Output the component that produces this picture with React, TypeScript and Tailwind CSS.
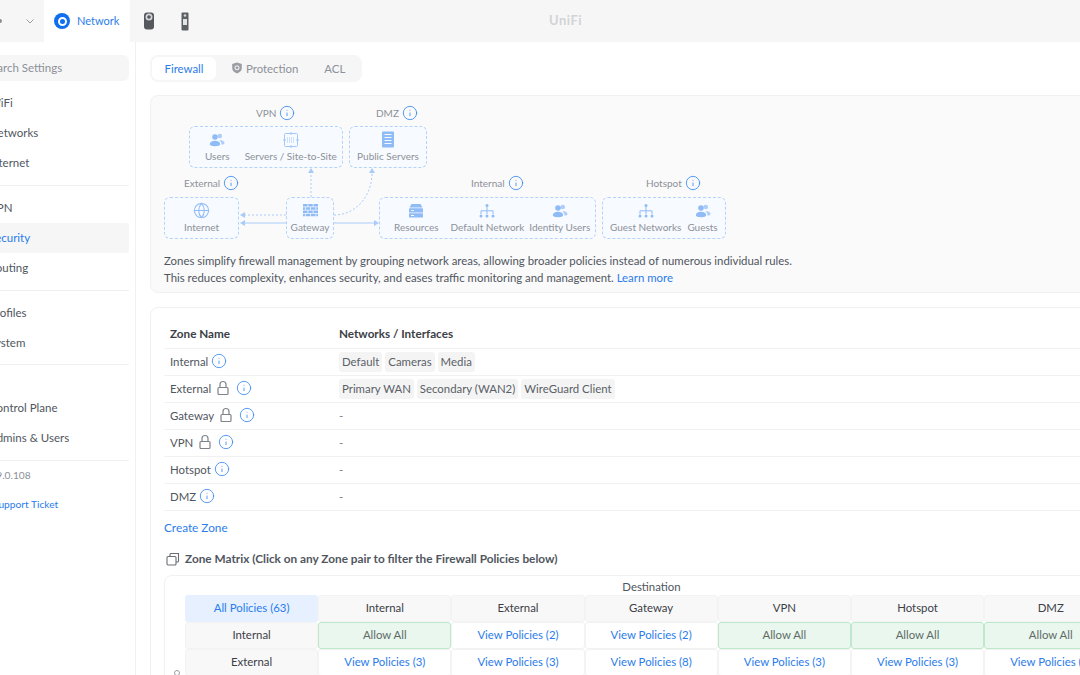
import { Globe, Info } from 'lucide-react';

const zoneRows = [
  { name: 'Internal', locked: false, nets: ['Default', 'Cameras', 'Media'] },
  { name: 'External', locked: true, nets: ['Primary WAN', 'Secondary (WAN2)', 'WireGuard Client'] },
  { name: 'Gateway', locked: true, nets: [] },
  { name: 'VPN', locked: true, nets: [] },
  { name: 'Hotspot', locked: false, nets: [] },
  { name: 'DMZ', locked: false, nets: [] },
];

const matrixHead = ['Internal', 'External', 'Gateway', 'VPN', 'Hotspot', 'DMZ'];
const matrixRows = [
  { name: 'Internal', cells: ['Allow All', 'View Policies (2)', 'View Policies (2)', 'Allow All', 'Allow All', 'Allow All'] },
  { name: 'External', cells: ['View Policies (3)', 'View Policies (3)', 'View Policies (8)', 'View Policies (3)', 'View Policies (3)', 'View Policies (3)'] },
];

function InfoIcon({ className = '' }: { className?: string }) {
  return <Info className={`w-[16px] h-[16px] text-[#3d8bf2] shrink-0 ${className}`} strokeWidth={1.3} />;
}

function LockIcon() {
  return (
    <svg width="14" height="16" viewBox="0 0 14 16" fill="none" stroke="#7f8389" strokeWidth="1.2" className="shrink-0 ml-[5px]">
      <rect x="2" y="7.500" width="10" height="7" rx="1" />
      <path d="M4 7.500V4.500a3 3 0 0 1 6 0v3" />
    </svg>
  );
}

function UsersIcon() {
  return (
    <svg width="16" height="16" viewBox="0 0 16 16" fill="#8fbbf7">
      <circle cx="10.800" cy="4" r="2.300" opacity="0.7" />
      <path d="M10 8c3 0 5.500 1 5.500 3 0 1-1 1.500-3 1.500 0-2-1-3.500-2.500-4.500z" opacity="0.7" />
      <circle cx="6" cy="5" r="2.800" />
      <path d="M.8 12.300C.8 10 3 8.700 6 8.700s5.200 1.300 5.200 3.600c0 1.200-2 1.900-5.200 1.900S.8 13.500.8 12.300z" />
    </svg>
  );
}

function SiteIcon() {
  return (
    <svg width="16" height="16" viewBox="0 0 16 16" fill="none" stroke="#a5c8f8" strokeWidth="1">
      <rect x="1.500" y="1.500" width="13" height="13" rx="1" />
      <path d="M8 0v3M8 13v3M0 8h3M13 8h3" />
      <path d="M4 6h8M4 8h8M4 10h8" strokeDasharray="1 1" />
    </svg>
  );
}

function PublicServerIcon() {
  return (
    <svg width="16" height="17" viewBox="0 0 16 17" fill="#8fbbf7">
      <path fillRule="evenodd" d="M3 .5h10a1 1 0 0 1 1 1v14a1 1 0 0 1-1 1H3a1 1 0 0 1-1-1v-14a1 1 0 0 1 1-1zM4.500 3v1h7V3zm0 3v1h7V6zm0 3v1h7V9zm0 3v1h7v-1z" />
    </svg>
  );
}

function WallIcon() {
  return (
    <svg width="15" height="15" viewBox="0 0 15 15" fill="#8fbbf7">
      <path d="M0 1h4.500v2.500H0zM5.250 1h4.500v2.500h-4.500zM10.500 1H15v2.500h-4.500zM0 4.250h2v2.500H0zM2.750 4.250h4.500v2.500h-4.500zM8 4.250h4.500v2.500H8zM13.250 4.250H15v2.500h-1.750zM0 7.500h4.500V10H0zM5.250 7.500h4.500V10h-4.500zM10.500 7.500H15V10h-4.500zM0 10.750h2v2.500H0zM2.750 10.750h4.500v2.500h-4.500zM8 10.750h4.500v2.500H8zM13.250 10.750H15v2.500h-1.750z" />
    </svg>
  );
}

function ServerStackIcon() {
  return (
    <svg width="16" height="16" viewBox="0 0 16 16" fill="#8fbbf7">
      <path d="M3.500 1h9l2 3.500h-13z" />
      <rect x="1" y="5.200" width="14" height="4.300" rx="0.600" />
      <rect x="1" y="10.300" width="14" height="4.300" rx="0.600" />
      <path d="M3 7h3v0.800H3zM3 12.100h3v0.800H3z" fill="#fff" />
    </svg>
  );
}

function HierarchyIcon() {
  return (
    <svg width="16" height="16" viewBox="0 0 16 16" fill="#8fbbf7" stroke="none">
      <circle cx="8" cy="2.500" r="1.500" />
      <circle cx="2" cy="13" r="1.500" />
      <circle cx="8" cy="13" r="1.500" />
      <circle cx="14" cy="13" r="1.500" />
      <path d="M8 4v7M2 11V7.800h12V11" fill="none" stroke="#8fbbf7" strokeWidth="1" />
    </svg>
  );
}

function ShieldIcon() {
  return (
    <svg width="12" height="12" viewBox="0 0 12 12" className="shrink-0">
      <path d="M6 .5l4.800 1.500v4c0 2.800-2.200 4.500-4.800 5.500C3.400 10.500 1.200 8.800 1.200 6V2z" fill="#9a9ea4" />
      <circle cx="6" cy="5.800" r="2.500" fill="#e6e7e9" />
      <circle cx="6" cy="5.800" r="1.300" fill="#9a9ea4" />
    </svg>
  );
}

function DiagramItem({ icon, label, className = '' }: { icon: React.ReactNode; label: string; className?: string }) {
  return (
    <div className={`flex flex-col items-center gap-[1px] ${className}`}>
      <div className="h-[17px] flex items-center justify-center">{icon}</div>
      <span className="text-[10px] leading-[14px] text-[#8d9198] whitespace-nowrap">{label}</span>
    </div>
  );
}

function ZoneLabel({ label, className }: { label: string; className: string }) {
  return (
    <div className={`absolute flex items-center gap-[3px] h-[14px] text-[10px] text-[#8d9198] ${className}`}>
      {label}
      <InfoIcon />
    </div>
  );
}

function ZoneBox({ className, children }: { className: string; children: React.ReactNode }) {
  return (
    <div className={`absolute h-[42px] flex items-center bg-[#f7faff] border border-dashed border-[#b5d2fa] rounded-[6px] ${className}`}>
      {children}
    </div>
  );
}

function Connectors() {
  return (
    <svg className="absolute inset-0 pointer-events-none" width="600" height="155" fill="none" stroke="#a9cbf9" strokeWidth="1">
      <path d="M160 101V77" strokeDasharray="2 2" />
      <path d="M160 72l-3 5h6z" fill="#a9cbf9" stroke="none" />
      <path d="M183 119C205 119 221 100 221 77" strokeDasharray="2 2" />
      <path d="M221 72l-3 5h6z" fill="#a9cbf9" stroke="none" />
      <path d="M135 119H94" strokeDasharray="2 2" />
      <path d="M89 119l5-3v6z" fill="#a9cbf9" stroke="none" />
      <path d="M135 127H94" />
      <path d="M89 127l5-3v6z" fill="#a9cbf9" stroke="none" />
      <path d="M183 127H223" />
      <path d="M228 127l-5-3v6z" fill="#a9cbf9" stroke="none" />
    </svg>
  );
}

function TopBar() {
  return (
    <header className="h-[42px] shrink-0 flex items-center bg-[#f6f6f7]">
      <span className="w-[2px] h-[4px] rounded-r-full bg-[#8a8e94]" />
      <svg width="8" height="5" viewBox="0 0 8 5" fill="none" stroke="#9a9ea4" strokeWidth="1" className="ml-[24px]">
        <path d="M.5.500L4 4 7.500.500" />
      </svg>
      <div className="ml-[10px] w-[86px] h-full flex items-center bg-white pl-[10px] gap-[7px]">
        <span className="w-4 h-4 rounded-full bg-[#0f6ff0] flex items-center justify-center">
          <span className="w-[9px] h-[9px] rounded-full border-[2px] border-white" />
        </span>
        <span className="text-[11px] text-[#2a7ceb]">Network</span>
      </div>
      <svg width="12" height="18" viewBox="0 0 12 18" className="ml-[13px]">
        <rect x="1" y="0.500" width="10" height="17" rx="3" fill="#55585d" />
        <circle cx="6" cy="5" r="3.500" fill="#d4d5d7" />
        <circle cx="6" cy="5" r="1.800" fill="#55585d" />
      </svg>
      <svg width="8" height="19" viewBox="0 0 8 19" className="ml-[26px]">
        <rect x="0.500" y="0.500" width="7" height="18" rx="1" fill="#5c5f64" />
        <rect x="2" y="7" width="4" height="6" fill="#e2e3e5" />
        <circle cx="4" cy="3.500" r="1.300" fill="#d4d5d7" />
      </svg>
      <span className="ml-[360px] text-[13px] font-bold tracking-[0.5px] text-[#d2d3d6]">UniFi</span>
    </header>
  );
}

function SideRow({ label, active, small }: { label: string; active?: boolean; small?: boolean }) {
  return (
    <div
      className={`h-[30px] flex items-center rounded-[4px] whitespace-nowrap ${small ? 'pl-[17px] text-[10.200px] text-[#2a7ceb]' : 'pl-[13px] text-[11.500px]'} ${active ? 'bg-[#f6f6f7] text-[#2a7ceb]' : small ? '' : 'text-[#50565e]'}`}
    >
      {label}
    </div>
  );
}

function Sidebar() {
  return (
    <aside className="w-[136px] shrink-0 border-r border-[#f0f1f2] overflow-hidden">
      <div className="-ml-[24px] w-[153px] pt-[13px]">
        <div className="h-[26px] flex items-center pl-[9px] bg-[#f6f6f7] rounded-[6px] text-[11.500px] text-[#8d9198] whitespace-nowrap">
          Search Settings
        </div>
        <div className="mt-[7px]">
          <SideRow label="WiFi" />
          <SideRow label="Networks" />
          <SideRow label="Internet" />
        </div>
        <div className="my-[7px] border-t border-[#eeeff0]" />
        <SideRow label="VPN" />
        <SideRow label="Security" active />
        <SideRow label="Routing" />
        <div className="my-[7px] border-t border-[#eeeff0]" />
        <SideRow label="Profiles" />
        <SideRow label="System" />
        <div className="mt-[6px] border-t border-[#eeeff0]" />
        <div className="h-[28px] flex items-center pl-[3px] text-[10px] text-[#8d9198]">SITE</div>
        <SideRow label="Control Plane" />
        <SideRow label="Admins & Users" />
        <div className="mt-[7px] border-t border-[#eeeff0]" />
        <div className="h-[29px] flex items-center pl-[15px] text-[10.200px] text-[#8d9198]">v9.0.108</div>
        <SideRow label="Support Ticket" small />
      </div>
    </aside>
  );
}

function Tabs() {
  return (
    <div className="w-[212px] h-[27px] flex items-center bg-[#f6f6f7] rounded-[8px] p-[2px] text-[11.400px]">
      <div className="w-[64px] h-[23px] flex items-center justify-center bg-white rounded-[6px] text-[#2a7ceb]">Firewall</div>
      <div className="flex items-center gap-[3px] ml-[15px] text-[#8d9198]">
        <ShieldIcon />
        Protection
      </div>
      <div className="ml-[26px] text-[#8d9198]">ACL</div>
    </div>
  );
}

function DiagramPanel() {
  return (
    <section className="w-[1000px] h-[198px] mt-[13px] bg-[#fafafb] border border-[#f0f1f2] rounded-[8px]">
      <div className="relative h-[155.500px]">
        <Connectors />
        <ZoneLabel label="VPN" className="left-[105px] top-[10px]" />
        <ZoneLabel label="DMZ" className="left-[225px] top-[10px]" />
        <ZoneLabel label="External" className="left-[33px] top-[80px]" />
        <ZoneLabel label="Internal" className="left-[320px] top-[80px]" />
        <ZoneLabel label="Hotspot" className="left-[495px] top-[80px]" />
        <ZoneBox className="left-[38px] top-[30px] w-[154px] pl-[15px] gap-[15px]">
          <DiagramItem icon={<UsersIcon />} label="Users" />
          <DiagramItem icon={<SiteIcon />} label="Servers / Site-to-Site" />
        </ZoneBox>
        <ZoneBox className="left-[198px] top-[30px] w-[78px] justify-center">
          <DiagramItem icon={<PublicServerIcon />} label="Public Servers" />
        </ZoneBox>
        <ZoneBox className="left-[13px] top-[101px] w-[75px] justify-center">
          <DiagramItem icon={<Globe className="w-[17px] h-[17px] text-[#8fbbf7]" strokeWidth={1.5} />} label="Internet" />
        </ZoneBox>
        <ZoneBox className="left-[135px] top-[101px] w-[48px] justify-center">
          <DiagramItem icon={<WallIcon />} label="Gateway" />
        </ZoneBox>
        <ZoneBox className="left-[228px] top-[101px] w-[217px] pl-[14px]">
          <DiagramItem icon={<ServerStackIcon />} label="Resources" />
          <DiagramItem icon={<HierarchyIcon />} label="Default Network" className="ml-[12px]" />
          <DiagramItem icon={<UsersIcon />} label="Identity Users" className="ml-[5px]" />
        </ZoneBox>
        <ZoneBox className="left-[451px] top-[101px] w-[124px] pl-[7px] gap-[6px]">
          <DiagramItem icon={<HierarchyIcon />} label="Guest Networks" />
          <DiagramItem icon={<UsersIcon />} label="Guests" />
        </ZoneBox>
      </div>
      <p className="pl-[13px] text-[11.400px] leading-[17px] text-[#50565e]">
        Zones simplify firewall management by grouping network areas, allowing broader policies instead of numerous individual rules.
        <br />
        This reduces complexity, enhances security, and eases traffic monitoring and management. <span className="text-[#2a7ceb]">Learn more</span>
      </p>
    </section>
  );
}

function ZoneTable() {
  return (
    <div className="text-[11.400px]">
      <div className="h-[27px] pb-[2px] flex items-center border-b border-[#f0f1f2] font-bold text-[11.700px] text-[#3c4046]">
        <div className="w-[175px] pl-[6px]">Zone Name</div>
        <div>Networks / Interfaces</div>
      </div>
      {zoneRows.map((row) => (
        <div key={row.name} className="h-[27px] pb-[1px] flex items-center border-b border-[#f0f1f2]">
          <div className="w-[175px] pl-[6px] flex items-center text-[#50565e]">
            {row.name}
            {row.locked && <LockIcon />}
            <InfoIcon className={row.locked ? 'ml-[6px]' : 'ml-[3px]'} />
          </div>
          {row.nets.length > 0 ? (
            <div className="flex items-center gap-[3px]">
              {row.nets.map((net) => (
                <span key={net} className="h-[20px] px-[3px] flex items-center bg-[#f4f4f5] rounded-[3px] text-[#5a5f66]">
                  {net}
                </span>
              ))}
            </div>
          ) : (
            <span className="text-[#7b7f85]">-</span>
          )}
        </div>
      ))}
    </div>
  );
}

function MatrixCell({ text }: { text: string }) {
  const allow = text === 'Allow All';
  return (
    <div
      className={`h-[27px] pb-[1px] flex items-center justify-center rounded-[3px] border ${allow ? 'bg-[#e9f7ee] border-[#bde8ca] text-[#5f6b66]' : 'bg-white border-[#f3f3f4] text-[#2a7ceb]'}`}
    >
      {text}
    </div>
  );
}

function ZoneMatrix() {
  return (
    <div className="relative mt-[8px] pl-[20px] h-[150px] border border-[#f0f1f2] rounded-[8px] text-[11.400px]">
      <div className="h-[19px] pt-[2px] w-[933px] flex items-center justify-center text-[#50565e]">Destination</div>
      <svg width="8" height="8" viewBox="0 0 8 8" fill="none" stroke="#9a9ea4" className="absolute left-[8px] top-[93px]">
        <circle cx="4" cy="4" r="2.500" />
      </svg>
      <div className="grid grid-cols-[repeat(7,133.200px)] w-[933px]">
        <div className="h-[27px] pb-[1px] flex items-center justify-center bg-[#e6f0fe] rounded-[3px] text-[#2a7ceb]">All Policies (63)</div>
        {matrixHead.map((head) => (
          <div key={head} className="h-[27px] pb-[1px] flex items-center justify-center bg-[#f8f8f9] border border-[#f3f3f4] rounded-[3px] text-[#3c4046]">
            {head}
          </div>
        ))}
        {matrixRows.map((row) => (
          <div key={row.name} className="contents">
            <div className="h-[27px] pb-[1px] flex items-center justify-center bg-[#f8f8f9] border border-[#f3f3f4] rounded-[3px] text-[#3c4046]">{row.name}</div>
            {row.cells.map((cell, i) => (
              <MatrixCell key={i} text={cell} />
            ))}
          </div>
        ))}
      </div>
    </div>
  );
}

export default function App() {
  return (
    <div className="w-[1080px] h-[675px] overflow-hidden flex flex-col bg-white font-['Lato',sans-serif]">
      <TopBar />
      <div className="flex flex-1 min-h-0">
        <Sidebar />
        <main className="flex-1 min-w-0 overflow-hidden pl-[14px] pt-[13px]">
          <Tabs />
          <DiagramPanel />
          <section className="w-[1000px] mt-[14px] px-[13px] pt-[14px] h-[400px] border border-[#f0f1f2] rounded-[8px]">
            <ZoneTable />
            <div className="mt-[9px] h-[16px] leading-[16px] text-[11.800px] text-[#2a7ceb]">Create Zone</div>
            <div className="mt-[15px] h-[16px] flex items-center gap-[5px] text-[11.800px] font-bold text-[#50565e]">
              <svg width="14" height="13" viewBox="0 0 14 13" fill="none" stroke="#6b6f75" strokeWidth="1.100" className="ml-[2px]">
                <path d="M4 3V1.500a1 1 0 0 1 1-1h7.500v7.500a1 1 0 0 1-1 1H10" />
                <rect x="1" y="3.500" width="9" height="8.500" rx="1" />
              </svg>
              Zone Matrix (Click on any Zone pair to filter the Firewall Policies below)
            </div>
            <ZoneMatrix />
          </section>
        </main>
      </div>
    </div>
  );
}
